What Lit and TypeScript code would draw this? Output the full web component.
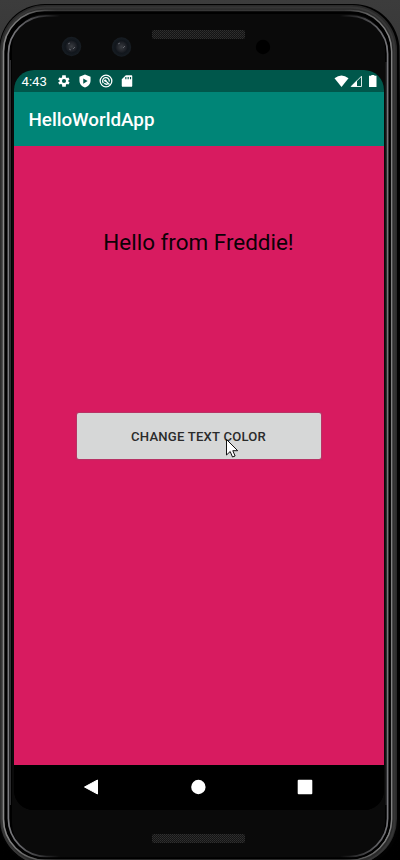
import { LitElement, html, css, svg } from "lit";
import { customElement } from "lit/decorators.js";

const ring = (l: number, t: number, r: number, b: number, rad: number, stroke: string, w: number) =>
  svg`<rect x=${l} y=${t} width=${r - l} height=${b - t} rx=${rad} fill="none" stroke=${stroke} stroke-width=${w} />`;

@customElement("app-root")
export class AppRoot extends LitElement {
  static styles = css`
    :host {
      display: block;
      position: relative;
      width: 400px;
      height: 860px;
      overflow: hidden;
      background: linear-gradient(#3c3c3c 0, #383838 50px, #050505 110px, #000 100%);
      font-family: Roboto, "Liberation Sans", sans-serif;
    }
    svg { display: block; }
    .frame { position: absolute; inset: 0; }
    .device {
      position: relative;
      box-sizing: border-box;
      height: 860px;
      padding: 70px 16px 50px 14px;
    }
    .screen {
      height: 740px;
      display: flex;
      flex-direction: column;
      border-radius: 20px;
      overflow: hidden;
      background: #000;
    }
    .status {
      height: 22px;
      flex: none;
      display: flex;
      align-items: center;
      background: #00574b;
      color: #fff;
      font-size: 13.2px;
      padding: 0 6px 0 7.5px;
    }
    .time { width: 35px; line-height: 22px; padding-top: 1px; }
    .icons { display: flex; gap: 7px; flex: 1; }
    .signals { display: flex; gap: 1px; }
    .bar {
      height: 53.5px;
      flex: none;
      display: flex;
      align-items: center;
      padding: 3px 0 0 14.5px;
      background: #008577;
      color: #fff;
      font-size: 18.8px;
      font-weight: 500;
      box-sizing: border-box;
    }
    .content {
      flex: 1;
      display: flex;
      flex-direction: column;
      align-items: center;
      background: #d81b60;
    }
    .hello {
      margin: 81px 1px 0 0;
      line-height: 30px;
      font-size: 22.45px;
      color: #0c0106;
      white-space: nowrap;
    }
    .button {
      margin: 156px 1px 0 0;
      width: 244px;
      height: 46px;
      border: 0;
      padding: 1px 0 0;
      border-radius: 2px;
      background: #d6d7d7;
      box-shadow: 0 0 1px 0.5px rgba(150, 80, 110, 0.5);
      font: 500 13.1px Roboto, sans-serif;
      letter-spacing: 0.22px;
      color: #2a2b2b;
    }
    .nav {
      height: 45px;
      box-sizing: border-box;
      padding: 0 2px 2px 0;
      flex: none;
      display: grid;
      grid-template-columns: repeat(3, 107px);
      justify-content: center;
      align-items: center;
      justify-items: center;
      background: #000;
    }
    .cursor { position: absolute; left: 225px; top: 438px; }
  `;

  private frame() {
    return html`<svg class="frame" width="400" height="860" viewBox="0 0 400 860">
      <defs>
        <pattern id="mesh" width="2" height="2" patternUnits="userSpaceOnUse">
          <rect width="2" height="2" fill="#141414" />
          <rect width="1" height="1" fill="#303030" />
          <rect x="1" y="1" width="1" height="1" fill="#292929" />
        </pattern>
        <radialGradient id="lens">
          <stop offset="0" stop-color="#3a3d42" />
          <stop offset=".5" stop-color="#1d2026" />
          <stop offset=".65" stop-color="#11161c" />
          <stop offset="1" stop-color="#171d23" />
        </radialGradient>
        <linearGradient id="outer" gradientUnits="userSpaceOnUse" x1="0" y1="0" x2="400" y2="0">
          <stop offset="0" stop-color="#8a8a8a" />
          <stop offset=".04" stop-color="#777" />
          <stop offset=".14" stop-color="#383838" />
          <stop offset=".86" stop-color="#383838" />
          <stop offset=".97" stop-color="#808080" />
        </linearGradient>
        <linearGradient id="inner" gradientUnits="userSpaceOnUse" x1="0" y1="0" x2="400" y2="0">
          <stop offset="0" stop-color="#8c8c90" />
          <stop offset=".05" stop-color="#66666a" />
          <stop offset=".15" stop-color="#0a0a0a" />
          <stop offset=".85" stop-color="#0a0a0a" />
          <stop offset=".95" stop-color="#66666a" />
          <stop offset="1" stop-color="#8c8c90" />
        </linearGradient>
      </defs>
      <rect x="-1" y="4" width="400.500" height="863" rx="46" fill="#020202" />
      <rect x="0" y="5" width="397" height="859" rx="45" fill="#2a2a2a" />
      ${ring(2, 7.5, 394.5, 864, 44, "#363636", 2)}
      <rect x="4" y="10.500" width="388" height="850" rx="41" fill="#000" />
      <rect x="12" y="12.500" width="373" height="846.500" rx="36" fill="#0a0a0a" />
      ${ring(3.5, 10.5, 391.6, 860, 41, "url(#outer)", 1.6)}
      ${ring(6.2, 13, 389.6, 858, 39, "#000", 2)}
      ${ring(8.4, 15.8, 387.6, 856.5, 38, "url(#inner)", 1.7)}
      <path d="M10.300 805V60M386.200 62V805" stroke="#343436" stroke-width="1.200" />
      <rect x="152" y="30" width="93" height="9" rx="2" fill="url(#mesh)" />
      <rect x="152" y="834" width="93" height="9" rx="2" fill="url(#mesh)" />
      <circle cx="71.500" cy="46.500" r="9.700" fill="url(#lens)" />
      <circle cx="121.500" cy="47" r="9.700" fill="url(#lens)" />
      <path d="M68 44l2-1m3 6l2-2m-6 2l2 1m47-6l2-1m3 5l2-2" stroke="#62656c" />
      <circle cx="263" cy="47" r="7.200" fill="#000" />
    </svg>`;
  }

  render() {
    return html`
      ${this.frame()}
      <div class="device">
        <main class="screen">
          <div class="status">
            <span class="time">4:43</span>
            <div class="icons">
              <svg width="14" height="14" viewBox="0 0 24 24" fill="#fff"><path fill-rule="evenodd" d="M19.400 13a7.500 7.500 0 0 0 0-2l2.100-1.600-2-3.500-2.500 1a8 8 0 0 0-1.700-1L15 2H9l-.4 3.900a8 8 0 0 0-1.700 1l-2.900-1-2 3.500L4.600 11a7.500 7.500 0 0 0 0 2l-2.600 1.600 2 3.500 2.900-1a8 8 0 0 0 1.700 1L9 22h6l.4-3.900a8 8 0 0 0 1.700-1l2.500 1 2-3.500zM12 15.500a3.500 3.500 0 1 1 0-7 3.500 3.500 0 0 1 0 7z"/></svg>
              <svg width="14" height="14" viewBox="0 0 24 24" fill="#fff"><path fill-rule="evenodd" d="M12 1L2.500 4.500V11c0 6 4 10.500 9.500 12 5.500-1.500 9.500-6 9.500-12V4.500zM9 7.500l7.500 4.500L9 16.500z"/></svg>
              <svg width="14" height="14" viewBox="0 0 24 24" fill="none" stroke="#fff"><circle cx="12" cy="12" r="10" stroke-width="2.200"/><path d="M7.500 15.500A5.700 5.700 0 1 1 17.500 13M10 10.500l8 7.500M9 16q3 2.500 6 1" stroke-width="2.200"/><circle cx="10.800" cy="11.300" r="2" fill="#fff" stroke="none"/></svg>
              <svg width="14" height="14" viewBox="0 0 24 24" fill="#fff"><path fill-rule="evenodd" d="M20 2H10L3 9v11q0 2 2 2h14q2 0 2-2V4q0-2-1-2zM9 8V5h2v4H9zM13 5h2v4h-2zM17 5h2v4h-2z"/></svg>
            </div>
            <div class="signals">
              <svg width="15" height="14" viewBox="0 0 15 14"><path d="M.5 4.200Q7.500-1.200 14.500 4.200L7.500 13z" fill="#fff"/></svg>
              <svg width="13" height="14" viewBox="0 0 13 14"><path d="M1.200 12.500H11.500V2.200z" fill="none" stroke="#dce9e7"/><path d="M1 12.500H7V6.500z" fill="#fff"/></svg>
              <svg width="14" height="14" viewBox="0 0 14 14"><path d="M5 1.800H7.300V1h3v.8H12.500V13H5z" fill="#fff"/></svg>
            </div>
          </div>
          <header class="bar">HelloWorldApp</header>
          <section class="content">
            <div class="hello">Hello from Freddie!</div>
            <button class="button">CHANGE TEXT COLOR</button>
          </section>
          <nav class="nav">
            <svg width="16" height="16" viewBox="0 0 16 16"><path d="M1.500 8L14.500 1V15z" fill="#fff" stroke="#fff" stroke-linejoin="round"/></svg>
            <svg width="16" height="16" viewBox="0 0 16 16"><circle cx="8.400" cy="8" r="7.200" fill="#fff"/></svg>
            <svg width="16" height="16" viewBox="0 0 16 16"><rect x=".7" y=".7" width="14.600" height="14.600" rx="1" fill="#fff"/></svg>
          </nav>
        </main>
      </div>
      <svg class="cursor" width="14" height="22" viewBox="0 0 14 22"><path d="M1.500 1.500V17l3.700-3.500L7.500 19l2.600-1-2.300-5.300h4.900z" fill="#fff" stroke="#111"/></svg>
    `;
  }
}
